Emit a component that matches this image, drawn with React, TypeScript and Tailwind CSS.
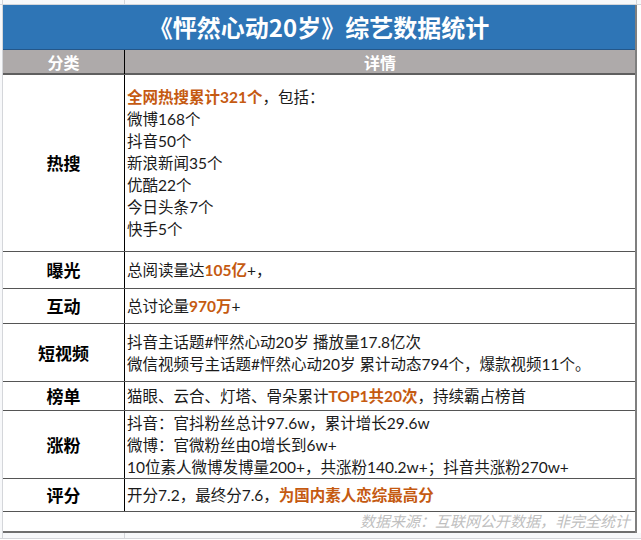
import React from 'react'

const font = { fontFamily: '"Noto Sans CJK SC", "Noto Sans", sans-serif' }
const bodyFont = { fontFamily: 'Lato, "Noto Sans CJK SC", sans-serif' }

const Hl: React.FC<{ children: React.ReactNode }> = ({ children }) => (
  <span className="font-bold text-[#c55a11]">{children}</span>
)

type Row = { label: string; h: string; lines: React.ReactNode[] }

const rows: Row[] = [
  {
    label: '热搜',
    h: 'h-[177px]',
    lines: [
      <><Hl>全网热搜累计321个</Hl>，包括：</>,
      '微博168个',
      '抖音50个',
      '新浪新闻35个',
      '优酷22个',
      '今日头条7个',
      '快手5个',
    ],
  },
  { label: '曝光', h: 'h-[37px]', lines: [<>总阅读量达<Hl>105亿</Hl>+，</>] },
  { label: '互动', h: 'h-[35px]', lines: [<>总讨论量<Hl>970万</Hl>+</>] },
  {
    label: '短视频',
    h: 'h-[58px]',
    lines: [
      '抖音主话题#怦然心动20岁 播放量17.8亿次',
      '微信视频号主话题#怦然心动20岁 累计动态794个，爆款视频11个。',
    ],
  },
  { label: '榜单', h: 'h-[29px]', lines: [<>猫眼、云合、灯塔、骨朵累计<Hl>TOP1共20次</Hl>，持续霸占榜首</>] },
  {
    label: '涨粉',
    h: 'h-[68px]',
    lines: [
      '抖音：官抖粉丝总计97.6w，累计增长29.6w',
      '微博：官微粉丝由0增长到6w+',
      '10位素人微博发博量200+，共涨粉140.2w+；抖音共涨粉270w+',
    ],
  },
  { label: '评分', h: 'h-[33px]', lines: [<>开分7.2，最终分7.6，<Hl>为国内素人恋综最高分</Hl></>] },
]

export default function App() {
  return (
    <div className="w-[641px] h-[540px] bg-white overflow-hidden" style={font}>
      <div className="flex h-[5px] border-b border-[#d4d6da] bg-[#f7f8fa]">
        <div className="w-[3px] border-r border-[#d4d6da]" />
        <div className="w-[122px] border-r border-[#d4d6da]" />
        <div className="w-[512px] border-r border-[#d4d6da]" />
      </div>
      <div className="flex">
        <div className="w-[3px] border-r border-[#d4d6da] bg-[#f7f8fa]" />
        <div className="w-[634px] border-r-2 border-[#7f7f7f]">
          <div className="h-[45px] bg-[#2e75b6] border-b border-[#24578a] flex items-center justify-center text-white font-bold text-[24px]">
            《怦然心动20岁》综艺数据统计
          </div>
          <div className="h-[25px] bg-[#aeaaaa] border-b-2 border-[#5f5f5f] grid grid-cols-[122px_1fr] text-white font-bold text-[16px]">
            <div className="flex items-center justify-center border-r border-black">分类</div>
            <div className="flex items-center justify-center">详情</div>
          </div>
          {rows.map((r) => (
            <div key={r.label} className={`${r.h} grid grid-cols-[122px_1fr] border-b border-[#555555]`}>
              <div className="flex items-center justify-center border-r border-black font-bold text-[17px] text-black">
                {r.label}
              </div>
              <div
                className="flex flex-col justify-center pl-[2px] text-[15.5px] leading-[22px] text-[#1a1a1a] whitespace-nowrap"
                style={bodyFont}
              >
                {r.lines.map((l, i) => (
                  <div key={i}>{l}</div>
                ))}
              </div>
            </div>
          ))}
          <div className="h-[21px] flex items-center justify-end pr-[5px] border-b-2 border-[#6f6f6f] italic text-[15px] text-[#bfbfbf]">
            数据来源：互联网公开数据，非完全统计
          </div>
        </div>
        <div className="flex-1 bg-white" />
      </div>
      <div className="flex h-[6px] bg-[#f7f8fa] border-b border-[#d4d6da]">
        <div className="w-[3px] border-r border-[#d4d6da]" />
        <div className="w-[122px] border-r border-[#d4d6da]" />
      </div>
    </div>
  )
}
